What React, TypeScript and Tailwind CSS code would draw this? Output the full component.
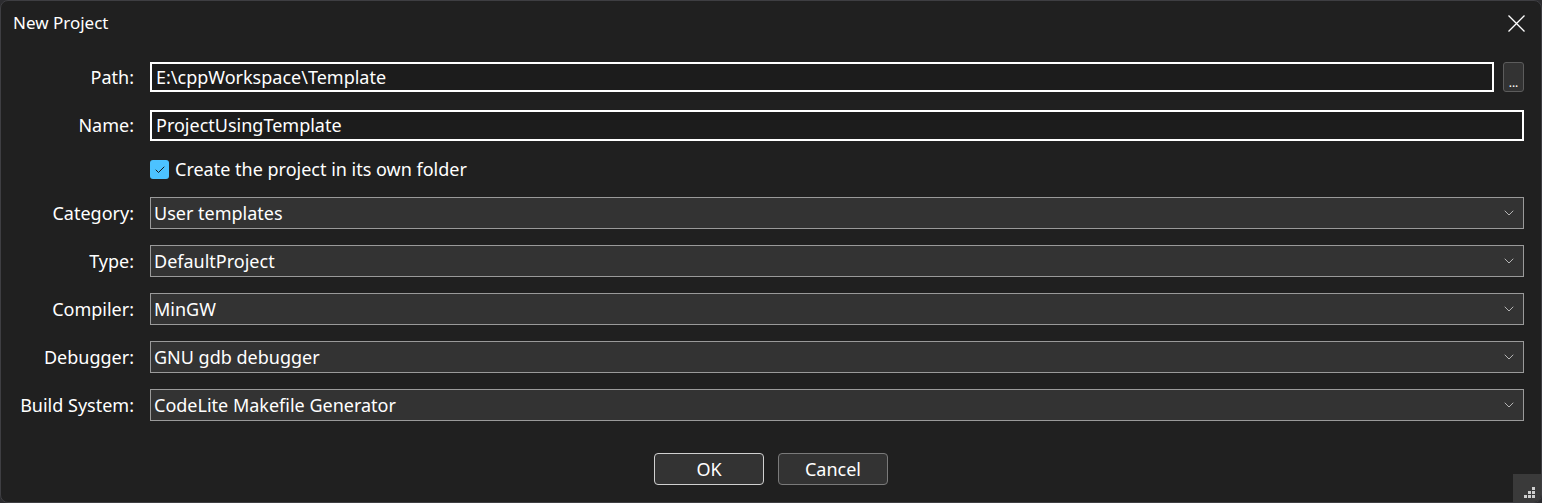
import { ChevronDown, Check } from "lucide-react";

const font = { fontFamily: '"Noto Sans", "Open Sans", sans-serif' };

type SelectRowProps = { label: string; value: string; className?: string };

function SelectRow({ label, value, className = "" }: SelectRowProps) {
  return (
    <div className={`flex items-center ${className}`}>
      <span className="w-[134px] shrink-0 pr-px text-right text-[18px] text-white">{label}</span>
      <div className="ml-[15px] flex h-[32px] flex-1 items-center justify-between border border-[#9a9a9a] bg-[#333333] pl-[3px] pr-[6px]">
        <span className="text-[18px] text-white">{value}</span>
        <ChevronDown className="h-[16px] w-[16px] text-[#cfcfcf]" strokeWidth={1.25} aria-hidden="true" />
      </div>
    </div>
  );
}

export default function App() {
  return (
    <div className="h-[503px] w-[1542px] bg-[#2c2c2f]" style={font}>
      <div className="relative flex h-full flex-col overflow-hidden rounded-[8px] border border-[#3e3e42] bg-[#202020]">
        <div className="flex h-[44px] shrink-0 items-center justify-between pl-[12px] pr-[16px]">
          <span className="text-[17px] text-white">New Project</span>
          <svg className="h-[17px] w-[17px]" viewBox="0 0 17 17" aria-hidden="true">
            <path d="M0.5 0.5 L16.5 16.5 M16.5 0.5 L0.5 16.5" stroke="white" strokeWidth="1.3" fill="none" />
          </svg>
        </div>

        <div className="flex flex-col pr-[17px] pt-[17px]">
          <div className="flex items-center">
            <span className="w-[134px] shrink-0 pr-px text-right text-[18px] text-white">Path:</span>
            <div className="ml-[15px] flex h-[30px] flex-1 items-center border-2 border-white bg-[#1c1c1c] px-[4px]">
              <span className="text-[18px] text-white">E:\cppWorkspace\Template</span>
            </div>
            <button
              className="ml-[9px] flex h-[30px] w-[21px] items-end justify-center rounded-[3px] border border-[#5c5c5c] bg-[#333333] pb-[2px] text-[12px] leading-none text-white"
              type="button"
            >
              ...
            </button>
          </div>

          <div className="mt-[18px] flex items-center">
            <span className="w-[134px] shrink-0 pr-px text-right text-[18px] text-white">Name:</span>
            <div className="ml-[15px] flex h-[31px] flex-1 items-center border-2 border-white bg-[#1c1c1c] px-[4px]">
              <span className="text-[18px] text-white">ProjectUsingTemplate</span>
            </div>
          </div>

          <div className="mt-[19px] flex h-[19px] items-center pl-[149px]">
            <span className="flex h-[19px] w-[19px] items-center justify-center rounded-[3px] bg-[#4cc2ff]">
              <Check className="h-[12px] w-[12px] text-[#1a1a1a]" strokeWidth={2} aria-hidden="true" />
            </span>
            <span className="ml-[6px] text-[18px] text-white">Create the project in its own folder</span>
          </div>

          <SelectRow className="mt-[18px]" label="Category:" value="User templates" />
          <SelectRow className="mt-[16px]" label="Type:" value="DefaultProject" />
          <SelectRow className="mt-[16px]" label="Compiler:" value="MinGW" />
          <SelectRow className="mt-[16px]" label="Debugger:" value="GNU gdb debugger" />
          <SelectRow className="mt-[16px]" label="Build System:" value="CodeLite Makefile Generator" />
        </div>

        <div className="mt-[32px] flex justify-center gap-[14px]">
          <button className="h-[32px] w-[110px] rounded-[4px] border border-[#d0d0d0] bg-[#333333] text-[18px] text-white" type="button">
            OK
          </button>
          <button className="h-[32px] w-[110px] rounded-[4px] border border-[#7a7a7a] bg-[#333333] text-[18px] text-white" type="button">
            Cancel
          </button>
        </div>

        <div className="absolute bottom-0 right-0 h-[28px] w-[28px] bg-[#3a3a3a]">
          <div className="absolute bottom-[4px] right-[6px] grid grid-cols-3 gap-[1px]">
            <span className="h-[3px] w-[3px]" />
            <span className="h-[3px] w-[3px]" />
            <span className="h-[3px] w-[3px] bg-[#cfcfcf]" />
            <span className="h-[3px] w-[3px]" />
            <span className="h-[3px] w-[3px] bg-[#cfcfcf]" />
            <span className="h-[3px] w-[3px] bg-[#cfcfcf]" />
            <span className="h-[3px] w-[3px] bg-[#cfcfcf]" />
            <span className="h-[3px] w-[3px] bg-[#cfcfcf]" />
            <span className="h-[3px] w-[3px] bg-[#cfcfcf]" />
          </div>
        </div>
      </div>
    </div>
  );
}
